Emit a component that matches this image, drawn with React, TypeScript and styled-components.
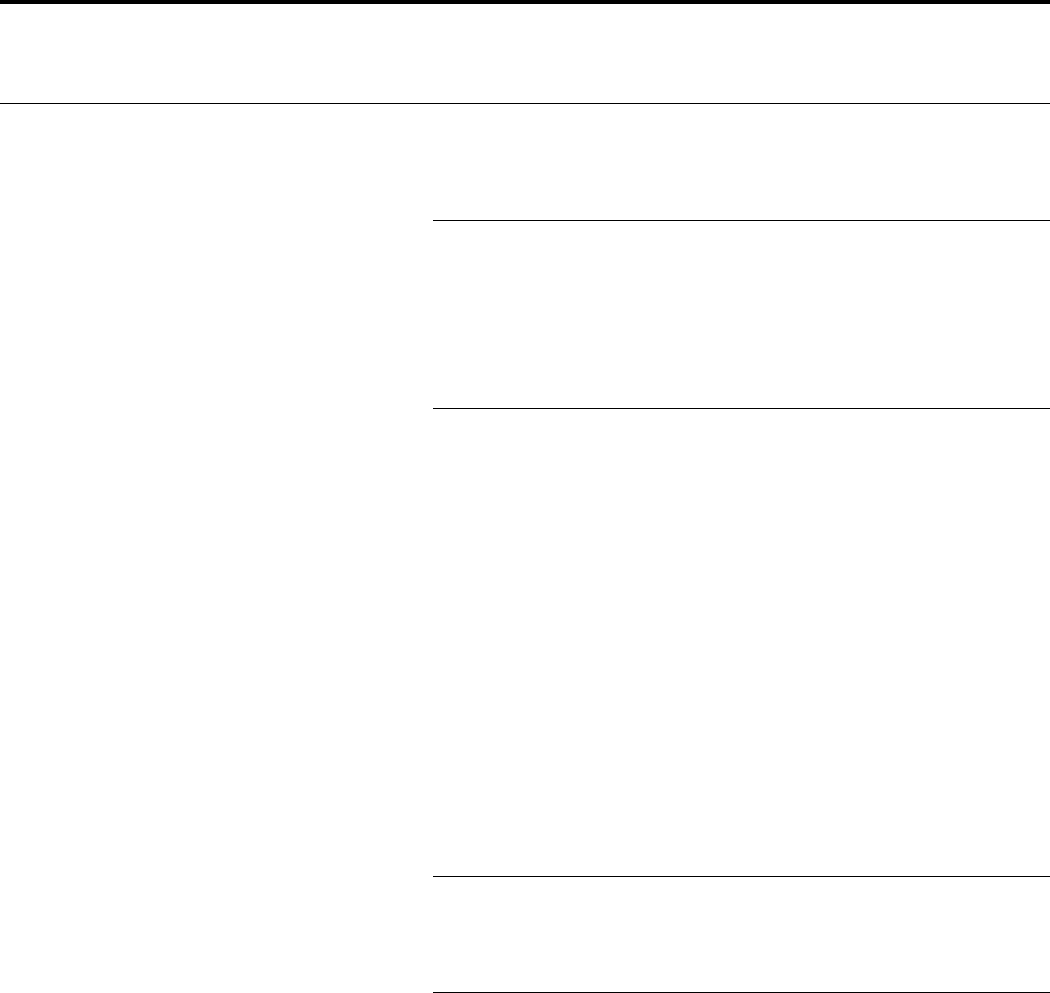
import styled, { createGlobalStyle } from 'styled-components';
import * as React from 'react';

const GlobalStyle = createGlobalStyle`
  html, body { margin:0; padding:0; background:#ffffff; }
  body { font-family: "Liberation Sans", Arial, sans-serif; color:#000; }
`;

const HeaderWrap = styled.header`
  width:100%; height:99px;
  border-top:4px solid #000000;
  border-bottom:1px solid #000000;
`;

const MainWrap = styled.main`
  display:grid;
  grid-template-columns:433px 1fr;
`;

const SideBar = styled.aside``;

const Content = styled.div`
  display:flex;
  flex-direction:column;
`;

const Section = styled.section<{ h: number }>`
  height:${(props) => props.h}px;
  border-bottom:1px solid #000000;
`;

const App = () => {
  const SectionData = [116, 187, 467, 115];
  return (
    <>
      <GlobalStyle />
      <HeaderWrap />
      <MainWrap>
        <SideBar />
        <Content>
          {SectionData.map((h, i) => {
            return <Section key={i} h={h} />;
          })}
        </Content>
      </MainWrap>
    </>
  );
};

export default App;
